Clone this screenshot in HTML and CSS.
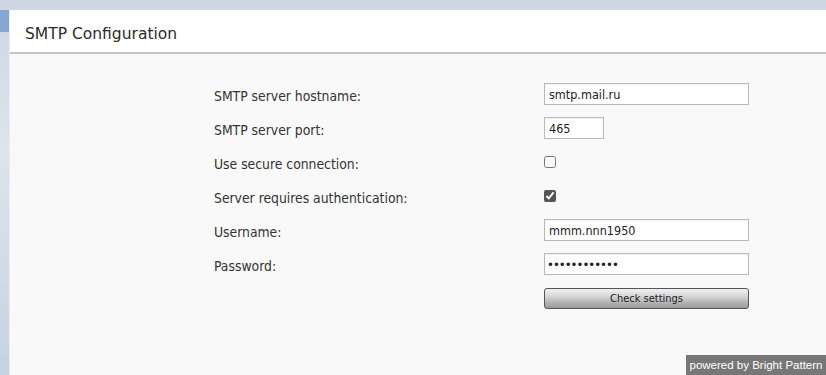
FILE: index.html
```html
<!DOCTYPE html>
<html lang="en">
<head>
<meta charset="UTF-8" />
<title>SMTP Configuration</title>
<link rel="stylesheet" href="styles.css">
</head>
<body>

<div class="desk">
  <!-- полоска слева от окна -->
  <div class="side">
    <div class="side-tab"></div>
  </div>

  <div class="panel">
    <header class="panel-head">
      <h1>SMTP Configuration</h1>
    </header>

    <div class="panel-body">
      <form class="smtp-form">
        <label for="host">SMTP server hostname:</label>
        <input type="text" id="host" class="field" value="smtp.mail.ru" />

        <label for="port">SMTP server port:</label>
        <input type="text" id="port" class="field short" value="465" />

        <label for="secure">Use secure connection:</label>
        <span class="box"><input type="checkbox" id="secure" /></span>

        <label for="auth">Server requires authentication:</label>
        <span class="box"><input type="checkbox" id="auth" checked /></span>

        <label for="user">Username:</label>
        <input type="text" id="user" class="field" value="mmm.nnn1950" />

        <label for="pass">Password:</label>
        <input type="password" id="pass" class="field pass" value="123456789012" />

        <span></span>
        <button type="button" class="check-btn">Check settings</button>
      </form>
    </div>
  </div>
</div>

<div class="powered">powered by Bright Pattern</div>

</body>
</html>
```

FILE: styles.css
```css
/* Общие стили */
html, body {
  height: 100%;
}
body {
  margin: 0;
  background: #cfd7e3;
  font-family: "DejaVu Sans Condensed", "DejaVu Sans", sans-serif;
  color: #333;
  overflow: hidden;
}

.desk {
  display: flex;
  height: 100%;
}

/* Левая полоска */
.side {
  width: 9px;
  flex-shrink: 0;
  padding-top: 10px;
  background: linear-gradient(180deg, #cdd6e3 0%, #dfe4ea 40%, #c6d2e4 100%);
}
.side-tab {
  height: 22px;
  background: #86a7d3;
}

/* Окно */
.panel {
  flex-grow: 1;
  margin-top: 10px;
  display: flex;
  flex-direction: column;
  border-left: 1px solid #e8edf4;
}
.panel-head {
  box-sizing: border-box;
  height: 44px;
  background: #fff;
  border-bottom: 2px solid #c4c4c4;
  display: flex;
  align-items: center;
  padding: 6px 0 0 15px;
}
.panel-head h1 {
  margin: 0;
  font-family: "DejaVu Sans", sans-serif;
  font-size: 15.5px;
  font-weight: normal;
  color: #2b2b2b;
}
.panel-body {
  flex-grow: 1;
  background: #f9f9f9;
  padding: 23px 0 0 204px;
}

/* Форма */
.smtp-form {
  display: grid;
  grid-template-columns: 330px 205px;
  grid-auto-rows: 34px;
  align-items: center;
}
.smtp-form label {
  font-size: 13.8px;
  color: #333;
  padding-top: 3px;
}
.field {
  box-sizing: border-box;
  width: 205px;
  height: 22px;
  margin: 0;
  padding: 0 4px;
  border: 1px solid #b9b9b9;
  background: #fff;
  font-family: "DejaVu Sans Condensed", "DejaVu Sans", sans-serif;
  font-size: 12.5px;
  color: #222;
  box-shadow: inset 0 1px 2px rgba(0,0,0,0.06);
}
.field.short {
  width: 60px;
}
.field.pass {
  padding-left: 2px;
  letter-spacing: -1px;
  font-size: 13px;
}
.box {
  display: flex;
  align-items: center;
}
.box input {
  width: 12px;
  height: 12px;
  margin: 0;
  accent-color: #555;
}
.check-btn {
  box-sizing: border-box;
  width: 205px;
  height: 21px;
  margin: 0;
  padding: 0;
  border: 1px solid #555;
  border-radius: 3px;
  background: linear-gradient(180deg, #f2f2f2 0%, #d9d9d9 35%, #b4b4b4 70%, #9c9c9c 100%);
  font-family: "DejaVu Sans Condensed", "DejaVu Sans", sans-serif;
  font-size: 11px;
  color: #222;
  cursor: pointer;
}

/* Подпись в углу */
.powered {
  position: absolute;
  right: 0;
  bottom: 0;
  width: 140px;
  height: 20px;
  background: #777;
  color: #fff;
  font-family: "Liberation Sans", Arial, sans-serif;
  font-size: 11.5px;
  line-height: 20px;
  text-align: center;
}
```
